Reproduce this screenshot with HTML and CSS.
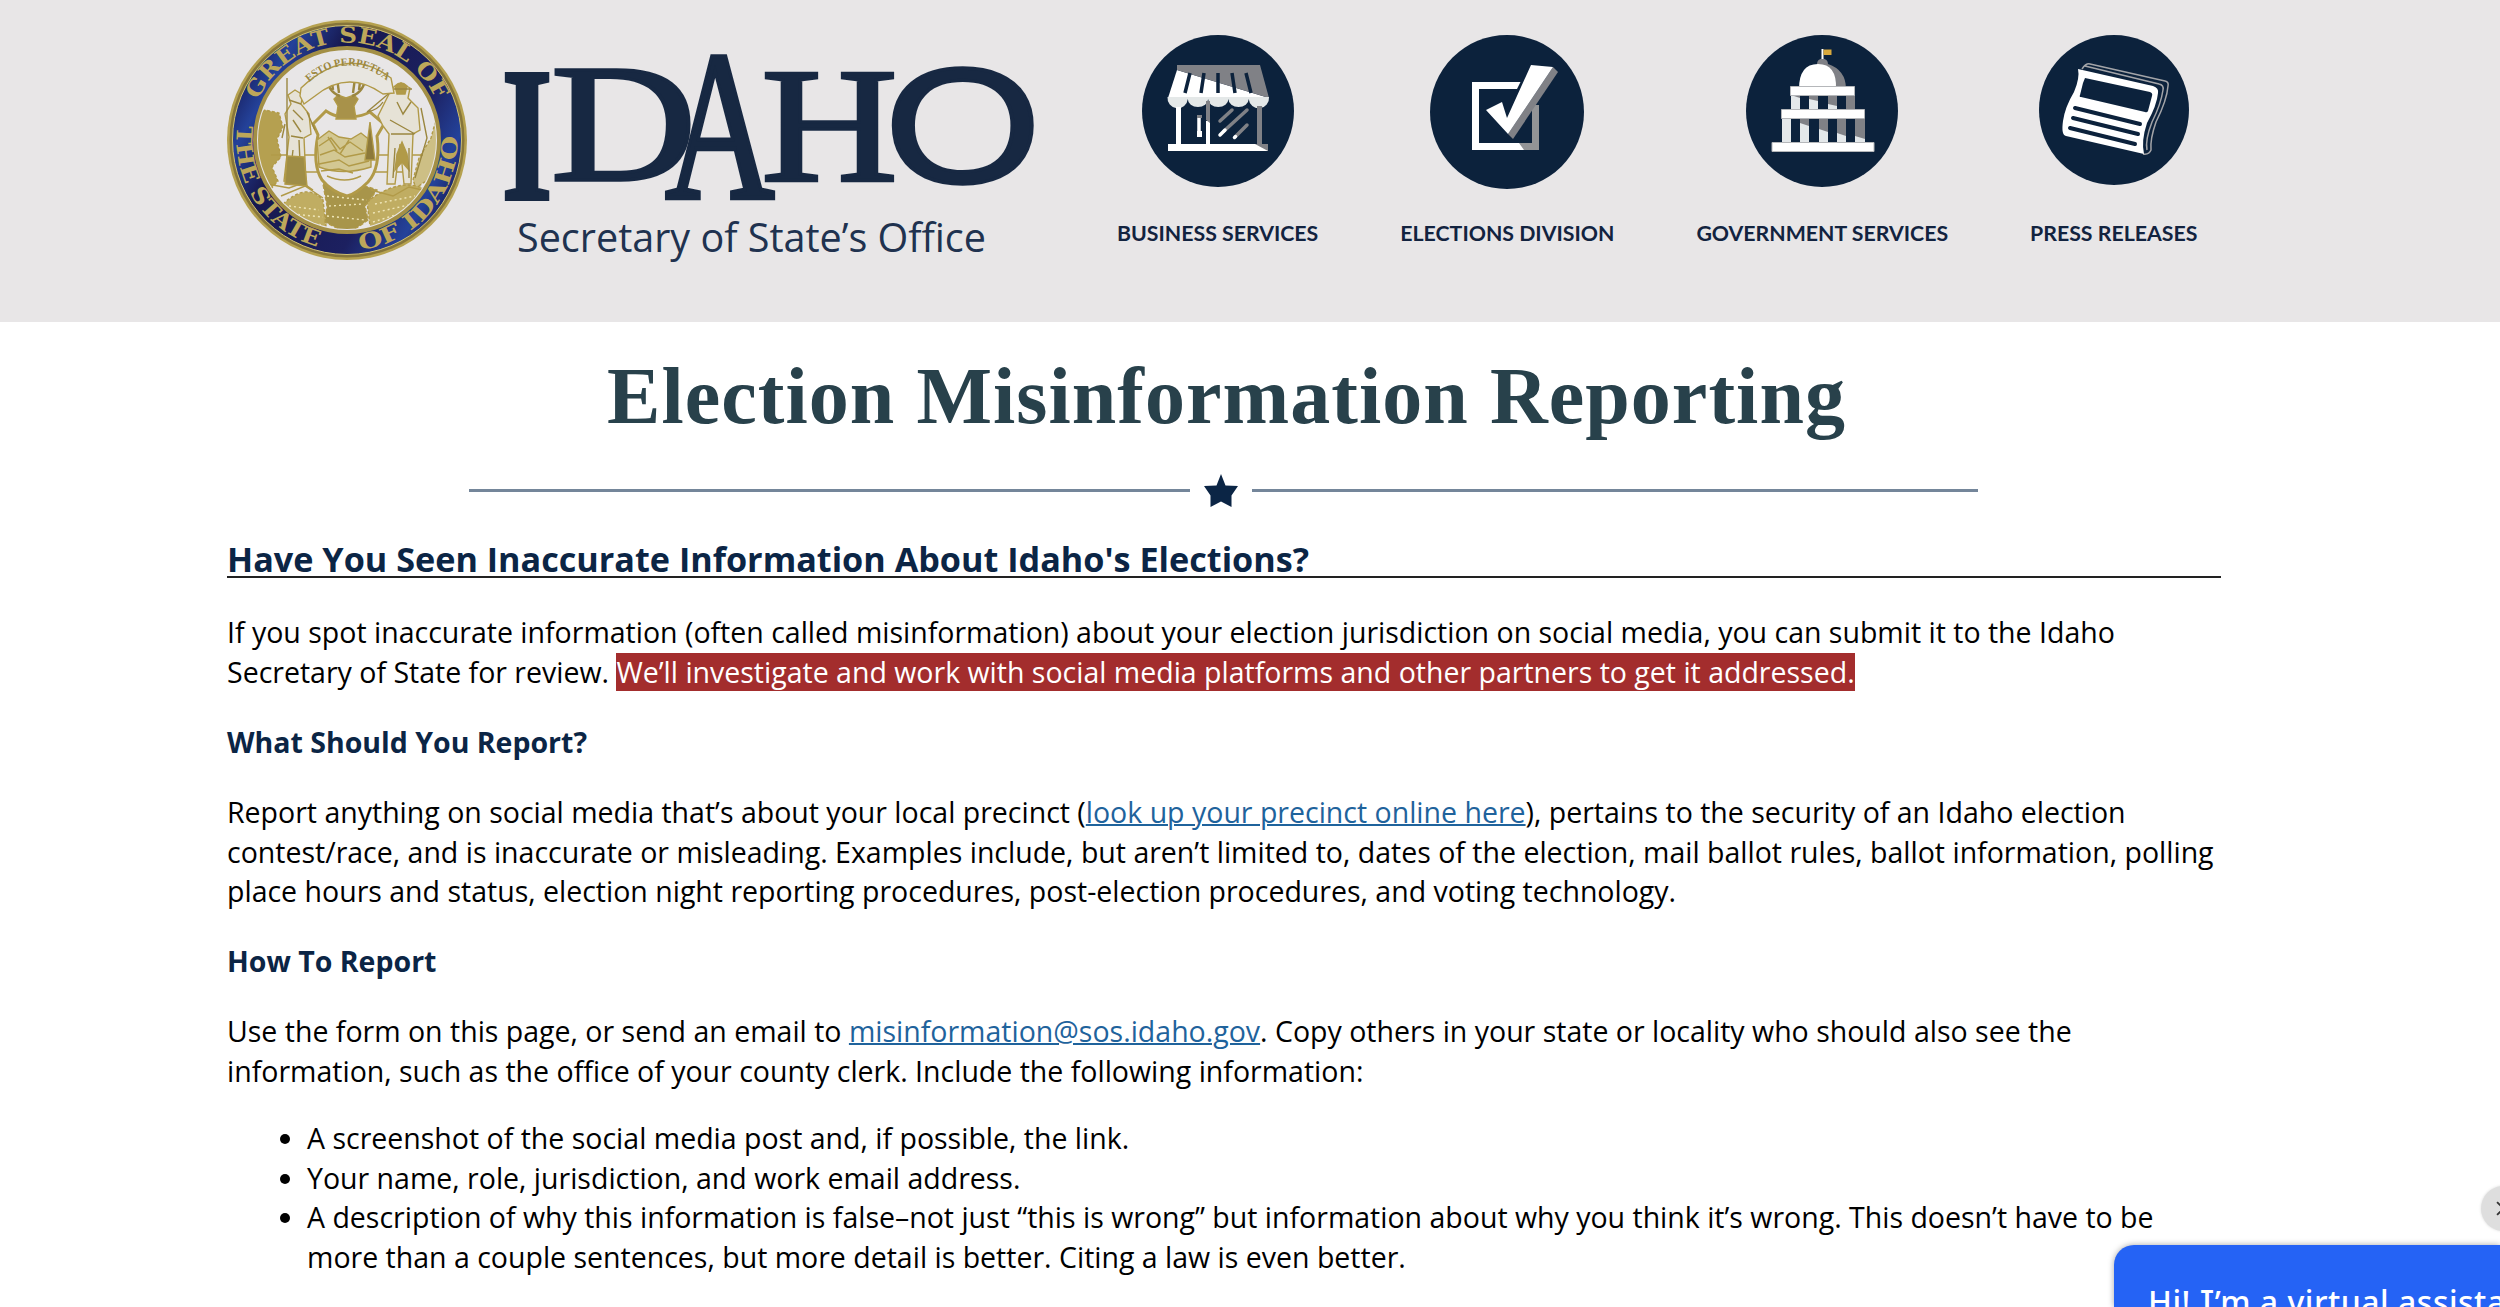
FILE: index.html
```html
<!DOCTYPE html>
<html lang="en">
<head>
  <meta charset="UTF-8">
  <title>Election Misinformation Reporting</title>
  <meta name="viewport" content="width=device-width, initial-scale=1.0">
  <link rel="stylesheet" href="styles.css">
</head>

<body>
  <header>
    <div class="brand">
      <svg class="seal" viewBox="0 0 240 240">
        <defs>
          <linearGradient id="ring" x1="0" y1="0.2" x2="1" y2="0.75">
            <stop offset="0" stop-color="#15164f"/>
            <stop offset=".15" stop-color="#24429a"/>
            <stop offset=".32" stop-color="#17184f"/>
            <stop offset=".7" stop-color="#1c2060"/>
            <stop offset=".88" stop-color="#24429a"/>
            <stop offset="1" stop-color="#15164f"/>
          </linearGradient>
          <clipPath id="inner"><circle cx="120" cy="120" r="89"/></clipPath>
          <path id="arcTop" d="M22.500 120a97.500 97.500 0 0 1 195 0"/>
          <path id="arcBottom" d="M11.200 100.800a110.500 110.500 0 1 0 217.600 0"/>
          <path id="arcMotto" d="M79 65Q120 26 165 65"/>
        </defs>
        <circle cx="120" cy="120" r="120" fill="#b5a14f"/>
        <circle cx="120" cy="120" r="117.500" fill="#86753a"/>
        <circle cx="120" cy="120" r="114.500" fill="url(#ring)" stroke="#cfc070" stroke-width="1"/>
        <circle cx="120" cy="120" r="92" fill="#e8e6e7" stroke="#a38f45" stroke-width="4"/>
        <g class="seal-text">
          <text><textPath href="#arcTop" startOffset="50%" text-anchor="middle" textLength="224" lengthAdjust="spacingAndGlyphs">GREAT SEAL OF</textPath></text>
          <text><textPath href="#arcBottom" startOffset="5" textLength="158" lengthAdjust="spacingAndGlyphs">THE STATE</textPath></text>
          <text><textPath href="#arcBottom" startOffset="206" textLength="164" lengthAdjust="spacingAndGlyphs">OF IDAHO</textPath></text>
        </g>
        <g clip-path="url(#inner)" fill="none" stroke="#b19a48" stroke-width="1.400">
          <path fill="#b5a050" stroke-dasharray="3 2" d="M28 98l10-8 14 3 4 14-6 12 4 18-9 10 6 14-8 9-17-8z"/>
          <path fill="#cdbf85" stroke-dasharray="3 2" d="M211 92l-7 26-12 20-6 22 3 8 20-14z"/>
          <path d="M44 135h152M60 152h120"/>
          <path fill="#c0ad62" stroke-dasharray="3 2" d="M56 184q24-22 40-4l3 26-17 8q-20-10-26-30zM140 182q30-24 56-14l-10 26-42 20z"/>
          <path fill="#a8954a" stroke-dasharray="4 2" d="M96 164l18 4 18-4 18 6-12 16 3 14-20 14-23-12 2-16z"/>
          <path d="M40 164l22 4 14-5 10 7M54 176l24-10 18 12M144 170l22 6 16-9 18 4"/>
          <path stroke="#efe6b8" stroke-dasharray="2 3" d="M62 186l30 4M66 194l30 3M72 202l24 3M100 176l40 4M102 186l34-2M100 196l38 4M148 184l40-8M146 193l40-9M146 202l32-10"/>
          <!-- shield -->
          <path fill="#e8e6e7" stroke-width="3" d="M86 104l13-13q12 8 21 4 9 4 23-3l14 12-7 12q4 32-9 46-12 12-21 14-15-4-25-16-10-16-4-45z"/>
          <path fill="#d3c893" d="M90 120l12-9 10 6 12 2 10-6 10 8v26q-28 9-52 0z"/>
          <path d="M92 126l12-8 9 11 10-7 13 9M93 135l14-5 11 7 20-4M92 144l20-4 10 6 20-5M94 151l18-2 14 4M100 156q18 8 34 0M101 117l9 14M122 120l-9 14"/>
          <path fill="#8d793a" d="M143 102l-5 38h10z"/>
          <!-- elk -->
          <path fill="#a8924a" d="M111 75l-4 4 4 7-2 13h20l-2-13 4-7-4-4-8 3z"/>
          <path stroke="#9b8740" stroke-width="2.400" d="M113 76q-12-4-14-20M106 70l-2-16M112 73l-3-22M125 76q12-4 14-20M132 70l2-16M126 73l3-22M139 62l7-4"/>
          <!-- Justice and the miner -->
          <path fill="#e6e2d6" d="M68 70l8 5-2 9 8 10 2 20-7 4 2 44-22-1 5-44-4-23 6-10-3-9z"/>
          <path stroke="#9b8740" d="M60 58v90M66 90l10 10M64 116l12 2M66 130l-4 34M72 120l2 44M58 104l-3 14M80 92l8 18M62 80l12 4M66 100l8 12"/>
          <path fill="#9f8d46" d="M60 136l17 1 3 29-22-2z"/>
          <path fill="#e6e2d6" d="M165 68l9-5 9 5-2 10 10 10 2 22-7 4-2 50h-7l-4-40-5 40h-8l2-50-6-8-5-10z"/>
          <path fill="#b19a48" d="M168 66q6-6 12 0l-2 8h-8zM170 134l5-12 5 12 2 16-7-8-7 8z"/>
          <path stroke="#9b8740" d="M165 69h20M170 82l6 12 8-12M163 100l25 14M164 114h23M156 82q-5 8-16 10M140 92l26-22M194 88l6 30-12 40M168 128l-2 30M182 128v30"/>
          <!-- banner -->
          <path fill="#e8e6e0" d="M74 68q46-44 90-10l3 15-11 1q-35-25-68 2l-11 8-4-8z"/>
        </g>
        <text class="motto"><textPath href="#arcMotto" startOffset="4" textLength="86" lengthAdjust="spacingAndGlyphs">ESTO PERPETUA</textPath></text>
      </svg>

      <svg class="wordmark" viewBox="0 0 540 220">
        <g class="state">
          <text class="bold" transform="translate(-1.300 149) scale(1.300 1.900)">I</text>
          <text transform="translate(47.800 130) scale(2.020 1.670)">D</text>
          <text transform="translate(162 148) scale(1.520 2.130)">A</text>
          <text transform="translate(258.300 130.400) scale(1.890 1.640)">H</text>
          <text class="round" transform="translate(381.300 131.700) scale(2.020 1.630)">O</text>
        </g>
        <text class="office" x="14" y="201.500" textLength="469" lengthAdjust="spacingAndGlyphs">Secretary of State’s Office</text>
      </svg>
    </div>

    <nav>
      <a class="business">
        <svg viewBox="0 0 152 152">
          <circle cx="76" cy="76" r="76" fill="#0c223c"/>
          <path fill="#fff" d="M35 35l-9 28h101z"/>
          <path fill="#808186" d="M35 30h83l9 33L35 35z"/>
          <path stroke="#0c223c" stroke-width="3.500" d="M48 38l-5 20M62 38l-3 20M76 38v20M90 38l3 20M104 38l5 20"/>
          <path fill="#e4e8e8" d="M25.500 62h101.500a10.100 10.300 0 0 1-20.300 2a10.100 8 0 0 1-20.300 0a10.100 8 0 0 1-20.300 0a10.100 8 0 0 1-20.300 0a10.100 10.300 0 0 1-20.300-2z"/>
          <path fill="#fff" d="M34 72h5v37h-5zM64 86h4v23h-4zM26 109h100v7H26z"/>
          <path fill="#808186" d="M64 66h4v22l-4-3zM115 71h5v38h-5zM113 109h13v7z"/>
          <g stroke-width="3.500" stroke-linecap="round">
            <path stroke="#fff" d="M57 82v18"/>
            <path stroke="#808186" d="M78 86l12-11M82 96l23-21M94 101l11-11"/>
            <path stroke="#fff" d="M78 100l5-5M92.500 102.500l1-1"/>
          </g>
          <path fill="#fff" d="M55 96h5v6h-5z"/>
          <path fill="#808186" d="M55 80h5v3h-5z"/>
        </svg>
        <span>BUSINESS SERVICES</span>
      </a>
      <a class="elections">
        <svg viewBox="0 0 154 154">
          <circle cx="77" cy="77" r="77" fill="#0c223c"/>
          <path fill="#fff" d="M42 47h67v68H42zM49 54v54h54V54z" fill-rule="evenodd"/>
          <path fill="#939496" d="M102 70h7v45H94l-5-7h13z"/>
          <path fill="#0c223c" d="M91 46h22v24h-10l-19-10z"/>
          <path fill="#808186" d="M123 32l5 5-45 67-5-5z"/>
          <path fill="#fff" d="M101 30l22 2-45 67-22-24 16-8 5 16z"/>
        </svg>
        <span>ELECTIONS DIVISION</span>
      </a>
      <a class="government">
        <svg viewBox="0 0 152 152">
          <circle cx="76" cy="76" r="76" fill="#0c223c"/>
          <path fill="#808186" d="M71 29a5 5 0 0 1 11 0q18 6 18 25H72z"/>
          <path fill="#fff" d="M53 54q0-25 19-25t18 25zM75.500 14h2v10h-2z"/>
          <path fill="#d9a93c" d="M77.500 14.500h8v5.500h-8z"/>
          <path fill="#e4e8ea" d="M45 60h9v15h-9zM63 60h9v15h-9zM82 60h9v15h-9zM100 60h9v15h-9zM36 84h9v24h-9zM54 84h9v24h-9zM73 84h9v24h-9zM91 84h9v24h-9zM109 84h10v24h-10z"/>
          <path fill="#808186" d="M45 60h9v3zM63 60h9v6l-9-2zM82 60h9v11l-9-2zM100 60h9v15h-9zM54 84h9v7l-9-3zM73 84h9v13l-9-3zM91 84h9v17l-9-3zM109 84h10v20l-10-3z"/>
          <path fill="#fff" stroke="#b5b7ba" d="M44.500 51.500h64v9h-64zM35.500 74.500h83v9h-83zM26 107.500h102v9H26z"/>
        </svg>
        <span>GOVERNMENT SERVICES</span>
      </a>
      <a class="press">
        <svg viewBox="0 0 150 150">
          <circle cx="75" cy="75" r="75" fill="#0c223c"/>
          <path fill="none" stroke="#a3a4a8" stroke-width="1.500" d="M43 34q4-6 8-5l75 17q4 1 3 5-1 14-12 36-6 17-5 28-2 5-8 4M46 31l74 18q5 1 4 6-2 14-11 32-7 18-5 28"/>
          <path fill="#fff" d="M39 34l75 17q6 2 5 7-1 12-11 30-6 18-3 31l-78-18q-5-1-3-15 2-14 11-29 6-14 4-23z"/>
          <path fill="#0c223c" d="M46 43l65 14q3 1 2 4l-4 15q-1 2-3 1L42 62q-2 0-1-2l3-12z"/>
          <path stroke="#0c223c" stroke-width="4" stroke-linecap="round" d="M36 73l65 16M34 83l65 16M31 93l65 16"/>
        </svg>
        <span>PRESS RELEASES</span>
      </a>
    </nav>
  </header>

  <main>
    <h1>Election Misinformation Reporting</h1>
    <div class="divider">
      <svg viewBox="0 0 34 33"><path fill="#0b2545" d="M17 0l4.500 11.500L34 12l-6.500 9.500L27.500 33l-10.500-5.500L6.500 33V21.500L0 12l12.500-.5z"/></svg>
    </div>

    <h2>Have You Seen Inaccurate Information About Idaho's Elections?</h2>
    <p>If you spot inaccurate information (often called misinformation) about your election jurisdiction on social media, you can submit it to the Idaho<br>
      Secretary of State for review. <mark>We’ll investigate and work with social media platforms and other partners to get it addressed.</mark></p>

    <h3>What Should You Report?</h3>
    <p>Report anything on social media that’s about your local precinct (<a href="#">look up your precinct online here</a>), pertains to the security of an Idaho election<br>
      contest/race, and is inaccurate or misleading. Examples include, but aren’t limited to, dates of the election, mail ballot rules, ballot information, polling<br>
      place hours and status, election night reporting procedures, post-election procedures, and voting technology.</p>

    <h3>How To Report</h3>
    <p>Use the form on this page, or send an email to <a href="#">misinformation@sos.idaho.gov</a>. Copy others in your state or locality who should also see the<br>
      information, such as the office of your county clerk. Include the following information:</p>

    <ul>
      <li>A screenshot of the social media post and, if possible, the link.</li>
      <li>Your name, role, jurisdiction, and work email address.</li>
      <li>A description of why this information is false–not just “this is wrong” but information about why you think it’s wrong. This doesn’t have to be<br>
        more than a couple sentences, but more detail is better. Citing a law is even better.</li>
    </ul>
  </main>

  <div class="chat-close">
    <svg viewBox="0 0 14 14"><path d="M1 1l12 12M13 1L1 13"/></svg>
  </div>
  <div class="chat">Hi! <span class="slab">I</span>’m a virtual assistant</div>
</body>
</html>
```

FILE: styles.css
```css
:root {
  --bar: #e8e6e7;
  --navy: #0b2545;
  --link: #1f639c;
}
html, body {
  height: 100%;
  overflow: hidden;
}
body {
  margin: 0;
  position: relative;
  font-family: "Open Sans", sans-serif;
  background: #fff;
  color: #000;
}
header {
  display: flex;
  height: 322px;
  background: var(--bar);
}
.brand {
  display: flex;
  margin-left: 227px;
  width: 870px;
  flex: none;
}
.seal {
  width: 240px;
  height: 240px;
  margin-top: 20px;
}
.seal-text {
  font: bold 22px "DejaVu Serif", serif;
  fill: #bda75a;
}
.motto {
  font: bold 11px "Liberation Serif", serif;
  fill: #9b873f;
}
.wordmark {
  width: 540px;
  height: 220px;
  margin: 50px 0 0 36px;
  overflow: visible;
}
.state {
  font-family: "Liberation Serif", serif;
  font-size: 100px;
  fill: #172842;
  stroke: #172842;
  stroke-width: 2;
}
.state .bold {
  font-weight: bold;
}
.state .round {
  font-family: "Liberation Sans", sans-serif;
}
.office {
  font-family: "Open Sans", sans-serif;
  font-size: 40px;
  fill: #20324f;
}
nav {
  display: flex;
  gap: 82px;
  padding-top: 35px;
  margin-left: 20px;
}
nav a {
  display: flex;
  flex-direction: column;
  align-items: center;
  height: 220px;
  color: #12233f;
  font: bold 21.300px/30px Lato, sans-serif;
  white-space: nowrap;
}
nav svg {
  width: 152px;
  height: 152px;
}
nav span {
  margin-top: auto;
  margin-bottom: 7px;
}
.elections svg {
  width: 154px;
  height: 154px;
}
.press svg {
  width: 150px;
  height: 150px;
}
main {
  width: 1994px;
  margin-left: 227px;
}
h1 {
  margin: 28px 0 0 380px;
  font: bold 80px/92px "Liberation Serif", serif;
  letter-spacing: 1.050px;
  color: #28414b;
  white-space: nowrap;
}
.divider {
  display: flex;
  align-items: center;
  gap: 14px;
  width: 1509px;
  height: 34px;
  margin: 31px 0 0 242px;
}
.divider svg {
  width: 34px;
  height: 33px;
}
.divider::before, .divider::after {
  content: "";
  height: 3px;
  background: #74869a;
  flex: 0 0 721px;
}
.divider::after {
  flex-basis: 726px;
}
h2 {
  margin: 35px 0;
  border-bottom: 2px solid #222;
  font-size: 34.200px;
  line-height: 34px;
  color: var(--navy);
}
p, h3, ul {
  margin: 0 0 30.200px;
  font-size: 28.500px;
  line-height: 39.800px;
  white-space: nowrap;
}
h3 {
  color: var(--navy);
}
mark {
  background: #a32d2d;
  color: #fff;
}
p a {
  color: var(--link);
  text-decoration-thickness: 2px;
}
ul {
  margin-top: -3.300px;
  padding-left: 80px;
}
.chat {
  position: absolute;
  left: 2114px;
  top: 1245px;
  right: 0;
  bottom: 0;
  overflow: hidden;
  box-sizing: border-box;
  padding: 35px 0 0 34px;
  border-radius: 20px 0 0 0;
  background: #2563f5;
  color: #fff;
  font: 500 32px/44px "Noto Sans", sans-serif;
  letter-spacing: .5px;
  white-space: nowrap;
  box-shadow: 0 0 6px rgba(0,0,0,.35);
}
.slab {
  font-family: Inter, sans-serif;
  font-feature-settings: "cv08";
}
.chat-close {
  position: absolute;
  left: 2481px;
  top: 1186px;
  width: 45px;
  height: 45px;
  display: flex;
  align-items: center;
  justify-content: center;
  border-radius: 50%;
  background: #dedede;
  box-shadow: 0 0 3px rgba(0,0,0,.15);
}
.chat-close svg {
  width: 15px;
  height: 15px;
  fill: none;
  stroke: #333;
  stroke-width: 1.800;
}
```
